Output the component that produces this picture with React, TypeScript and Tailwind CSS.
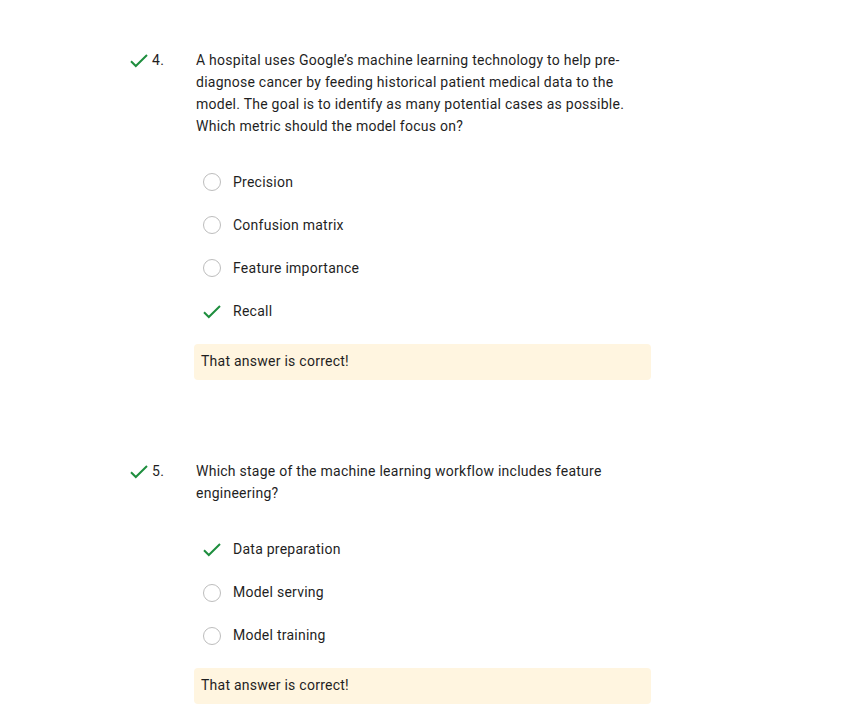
import React from "react";

const Check = () => (
  <svg width="18" height="14" viewBox="0 0 18 14" className="block">
    <path d="M1 7.2 L5.8 12 L17 1" fill="none" stroke="#1e8e3e" strokeWidth="2" />
  </svg>
);

const Radio = () => (
  <div className="w-[18px] h-[18px] rounded-full border border-[#bdbdbd] bg-white" />
);

type Q = {
  n: number;
  text: string;
  options: { label: string; correct?: boolean }[];
};

const questions: Q[] = [
  {
    n: 4,
    text:
      "A hospital uses Google\u2019s machine learning technology to help pre-diagnose cancer by feeding historical patient medical data to the model. The goal is to identify as many potential cases as possible. Which metric should the model focus on?",
    options: [
      { label: "Precision" },
      { label: "Confusion matrix" },
      { label: "Feature importance" },
      { label: "Recall", correct: true },
    ],
  },
  {
    n: 5,
    text: "Which stage of the machine learning workflow includes feature engineering?",
    options: [
      { label: "Data preparation", correct: true },
      { label: "Model serving" },
      { label: "Model training" },
    ],
  },
];

function Question({ q }: { q: Q }) {
  return (
    <div className="flex">
      <div className="w-[64px] shrink-0 flex items-start h-[22px]">
        <div className="h-[22px] flex items-center pt-[1px]">
          <Check />
        </div>
        <span className="ml-[4px] leading-[22px]">{q.n}.</span>
      </div>
      <div className="w-[457px]">
        <p className="pl-[2px] pr-[8px] leading-[22px] hyphens-manual">{q.text}</p>
        <div className="mt-[23.5px] flex flex-col">
          {q.options.map((o) => (
            <div key={o.label} className="h-[43.2px] flex items-center pl-[9px]">
              <div className="w-[18px] flex justify-center items-center">
                {o.correct ? (
                  <div className="pt-[1px]">
                    <Check />
                  </div>
                ) : (
                  <Radio />
                )}
              </div>
              <span className="ml-[12px]">{o.label}</span>
            </div>
          ))}
        </div>
        <div className="mt-[11px] h-[36px] rounded-[4px] bg-[#fff5e0] flex items-center pl-[7px] pb-[1px]">
          That answer is correct!
        </div>
      </div>
    </div>
  );
}

export default function App() {
  return (
    <div
      className="min-h-[726px] bg-white text-[14px] tracking-[0.25px] text-[#1f1f1f] pl-[130px] pt-[49px]"
      style={{ fontFamily: "Roboto, 'Noto Sans', sans-serif" }}
    >
      <Question q={questions[0]} />
      <div className="h-[80px]" />
      <Question q={questions[1]} />
    </div>
  );
}
